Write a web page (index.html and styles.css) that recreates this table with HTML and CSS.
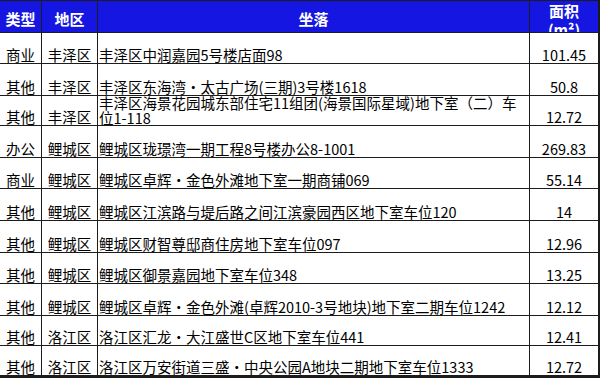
FILE: index.html
```html
<!DOCTYPE html>
<html lang="zh-CN">
<head>
<meta charset="utf-8">
<title>房产列表</title>
<link rel="stylesheet" href="styles.css">
</head>
<body>
<div class="sheet">
  <div class="hd c1">类型</div>
  <div class="hd c2">地区</div>
  <div class="hd c3">坐落</div>
  <div class="hd c4 wrap">面积<br>(m²)</div>

  <div class="cell mid">商业</div><div class="cell mid">丰泽区</div><div class="cell addr">丰泽区中润嘉园5号楼店面98</div><div class="cell mid">101.45</div>
  <div class="cell mid">其他</div><div class="cell mid">丰泽区</div><div class="cell addr">丰泽区东海湾・太古广场(三期)3号楼1618</div><div class="cell mid">50.8</div>
  <div class="cell mid">其他</div><div class="cell mid">丰泽区</div><div class="cell addr multi">丰泽区海景花园城东部住宅11组团(海景国际星域)地下室（二）车<br>位1-118</div><div class="cell mid">12.72</div>
  <div class="cell mid">办公</div><div class="cell mid">鲤城区</div><div class="cell addr">鲤城区珑璟湾一期工程8号楼办公8-1001</div><div class="cell mid">269.83</div>
  <div class="cell mid">商业</div><div class="cell mid">鲤城区</div><div class="cell addr">鲤城区卓辉・金色外滩地下室一期商铺069</div><div class="cell mid">55.14</div>
  <div class="cell mid">其他</div><div class="cell mid">鲤城区</div><div class="cell addr">鲤城区江滨路与堤后路之间江滨豪园西区地下室车位120</div><div class="cell mid">14</div>
  <div class="cell mid">其他</div><div class="cell mid">鲤城区</div><div class="cell addr">鲤城区财智尊邸商住房地下室车位097</div><div class="cell mid">12.96</div>
  <div class="cell mid">其他</div><div class="cell mid">鲤城区</div><div class="cell addr">鲤城区御景嘉园地下室车位348</div><div class="cell mid">13.25</div>
  <div class="cell mid">其他</div><div class="cell mid">鲤城区</div><div class="cell addr">鲤城区卓辉・金色外滩(卓辉2010-3号地块)地下室二期车位1242</div><div class="cell mid">12.12</div>
  <div class="cell mid">其他</div><div class="cell mid">洛江区</div><div class="cell addr">洛江区汇龙・大江盛世C区地下室车位441</div><div class="cell mid">12.41</div>
  <div class="cell mid">其他</div><div class="cell mid">洛江区</div><div class="cell addr">洛江区万安街道三盛・中央公园A地块二期地下室车位1333</div><div class="cell mid">12.72</div>
</div>
</body>
</html>
```

FILE: styles.css
```css
html, body {
  margin: 0;
  padding: 0;
  background: #fff;
  width: 600px;
  height: 378px;
  overflow: hidden;
}

.sheet {
  width: 599px;
  display: grid;
  grid-template-columns: 41px 55px 431px 68px;
  grid-template-rows: 31px 30px 31px 29px 31px 30px 31px 31px 30px 31px 29px 29px 3px;
  gap: 1px;
  padding: 1px 1px 0 0;
  background: #1c1c1c;
  font-family: "Noto Sans CJK SC", "Noto Sans", sans-serif;
  color: #000;
}

.hd {
  background: #1616e2;
  color: #fff;
  font-weight: bold;
  font-size: 15px;
  line-height: 18px;
  display: flex;
  align-items: center;
  justify-content: center;
  padding-top: 5px;
  overflow: hidden;
  box-sizing: border-box;
}

.hd.wrap {
  align-items: flex-start;
  text-align: center;
  line-height: 19px;
  padding-top: 0;
}

.cell {
  background: #fff;
  font-size: 14.5px;
  line-height: 16px;
  display: flex;
  align-items: flex-end;
  overflow: hidden;
  white-space: nowrap;
}

.cell.mid {
  justify-content: center;
}

.cell.addr {
  padding-left: 1px;
}

.cell.multi {
  line-height: 15px;
}
```
